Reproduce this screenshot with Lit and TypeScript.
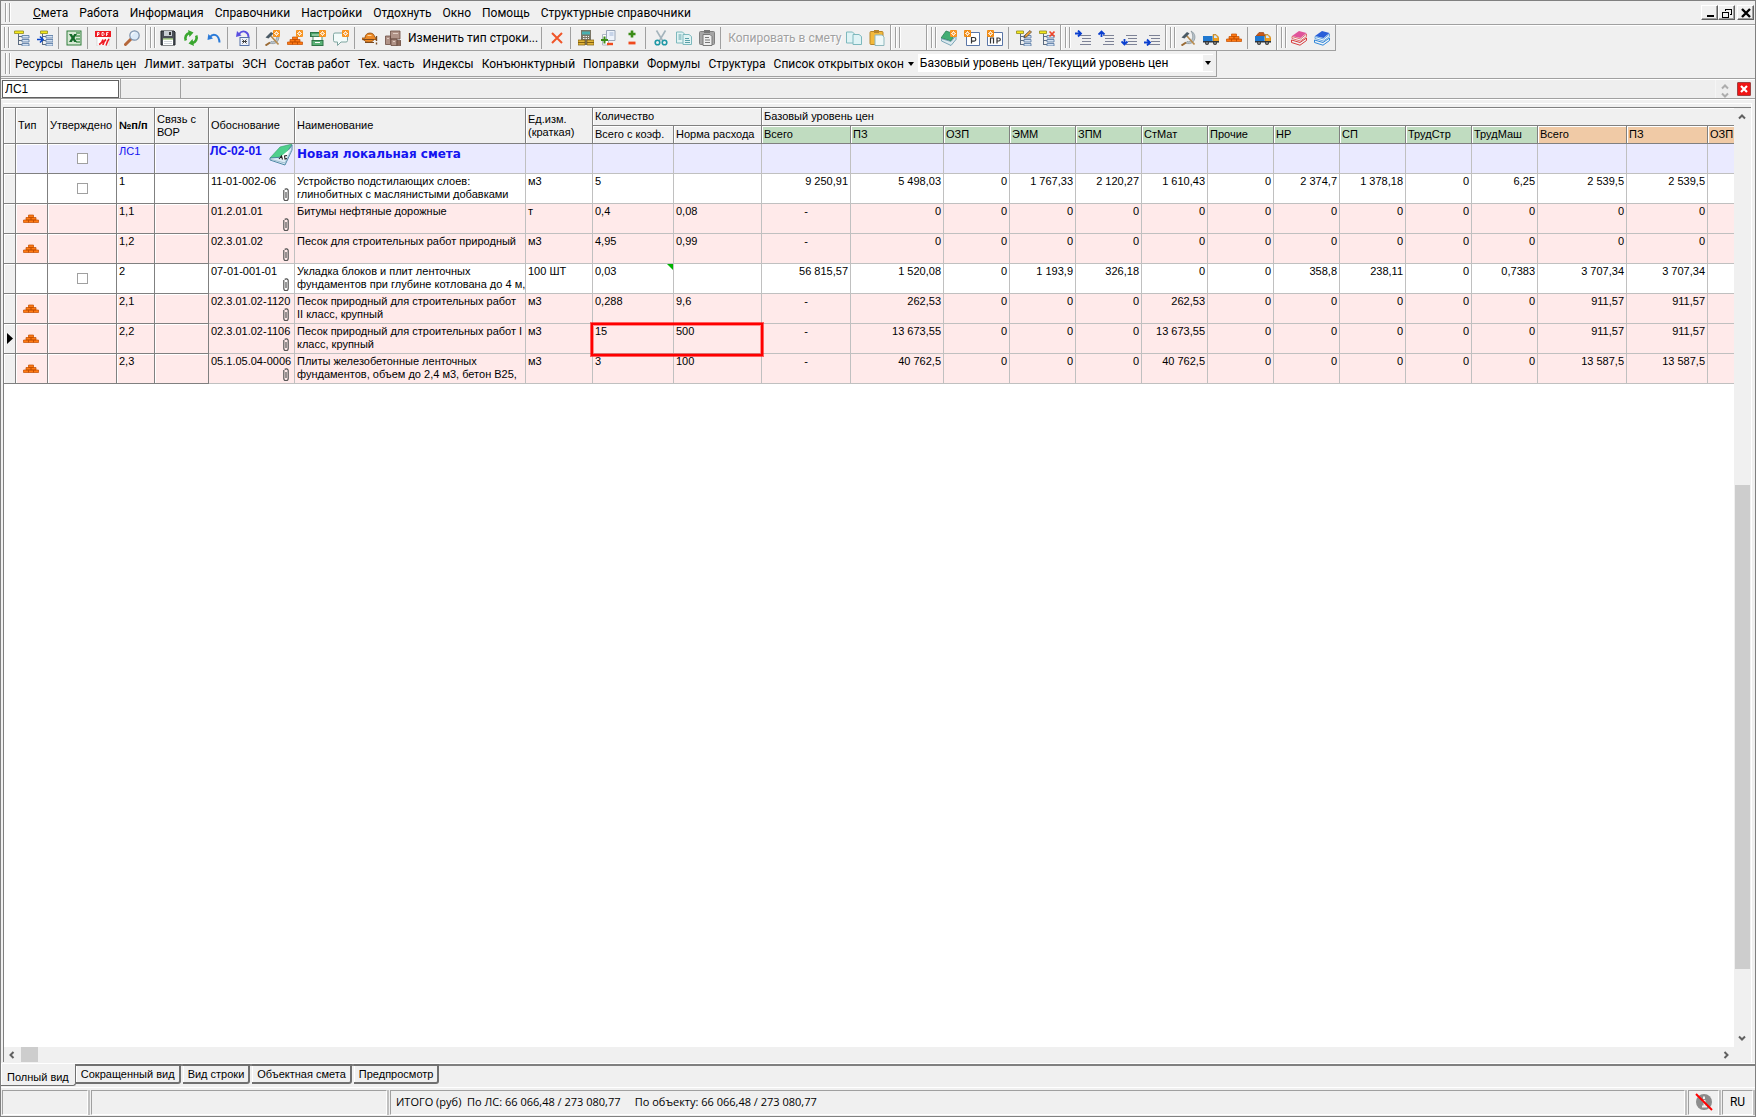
import { LitElement, html, svg, css, nothing } from "lit";
import type { SVGTemplateResult, TemplateResult } from "lit";
import { customElement, property } from "lit/decorators.js";
import { classMap } from "lit/directives/class-map.js";

const spark = svg`<rect x="9" y="0" width="7" height="7" rx="1" fill="#f7931e"/><path d="M12.500 1v5M10 3.500h5M10.800 1.800l3.400 3.400M14.200 1.800l-3.400 3.400" stroke="#fff" stroke-width=".8"/><circle cx="12.500" cy="3.500" r="1.300" fill="#f7931e" stroke="#fff" stroke-width=".8"/>`;
const sparkLeft = svg`<rect x="0" y="0" width="7" height="7" rx="1" fill="#f08a12"/><path d="M3.500 1v5M1 3.500h5M1.800 1.800l3.400 3.400M5.200 1.800L1.800 5.200" stroke="#fff" stroke-width=".8"/><circle cx="3.500" cy="3.500" r="1.200" fill="#f08a12" stroke="#fff" stroke-width=".8"/>`;
const bricksShape = svg`<path d="M5.500 4h5v2.500h-5zM3 6.500h5V9H3zM8 6.500h5V9H8zM.5 9h5v2.500h-5zM5.500 9h5v2.500h-5zM10.500 9h5v2.500h-5z" fill="#ff7a14" stroke="#c24e00" stroke-width=".7" stroke-linejoin="round"/>`;
const hammerShape = svg`<path d="M11 1c4 2 5.500 7 2 11-2 2-5 2-7.500 1l1.500-1.500c2 .5 4 0 5-2 1.500-3 .5-6-1-8.500z" fill="#b9c4cb" stroke="#75838c" stroke-width=".6"/><path d="M6 12.500L1.500 15.500" stroke="#9a6a34" stroke-width="2"/><path d="M6 5l8.500 9.500" stroke="#b78a4c" stroke-width="1.700"/><path d="M1.500 7.500L7 2l2.500 1.500L4.500 8.500z" fill="#4b5b66"/>`;
const treeLines = svg`<path d="M4.500 4v11M4.500 6.500H8M4.500 10.500H8M4.500 14.500H8" stroke="#5b6b80" fill="none"/><path d="M8 5.500h7v2.500H8zM8 9.500h7V12H8zM8 13.500h7V16H8z" fill="#d5e2f2" stroke="#5f7fa8" stroke-width=".9"/>`;
const pagePair = (fill: string) => svg`<path d="M.5 2h6l2 2v9h-8z" fill="${fill}" stroke="#7db8bd"/><path d="M7 4.500h6l2.500 2v8H7z" fill="${fill}" stroke="#7db8bd"/>`;
const paraLines = svg`<path d="M5 5.500h11M7 8.500h9M7 11.500h9M5 14.500h11" stroke="#7d8296" shape-rendering="crispEdges"/>`;
const books = (top: string, side: string) => svg`<path d="M1 6l7-5 7.500 2-6 5z" fill="${top}"/><path d="M1 6.500l8.500 2.500 6-5v2.500L9.500 11 1 8.500z" fill="#f4f8fb" stroke="${side}" stroke-width=".7"/><path d="M.5 10L9 12.500l6.500-4.500v2.500L9 15.200.5 12.500z" fill="#eef3f7" stroke="${side}" stroke-width="1"/>`;
const truckShape = svg`<path d="M10 4.500h3l3 3V12h-6z" fill="#f0a020" stroke="#a06000" stroke-width=".5"/><path d="M11 5.500h2L14.500 8H11z" fill="#cfe8ff"/><path d="M0 6h9.500v5H0z" fill="#1f78d0"/><path d="M0 11h16v1.500H0z" fill="#2a3440"/><circle cx="4" cy="13" r="2" fill="#333"/><circle cx="12" cy="13" r="2" fill="#333"/><circle cx="4" cy="13" r=".8" fill="#ccc"/><circle cx="12" cy="13" r=".8" fill="#ccc"/>`;

const ICONS: Record<string, SVGTemplateResult> = {
  tree: svg`${treeLines}<path d="M.5 1h9v2.500h-9z" fill="#f4e81c" stroke="#8f8a20" stroke-width=".8"/>`,
  treeArrow: svg`<g transform="translate(1 0)">${treeLines}</g><path d="M3.500 1h7v2.500h-7z" fill="#f4e81c" stroke="#8f8a20" stroke-width=".8"/><path d="M0 9.500h5M3 6.500l3 3-3 3" stroke="#0a46c8" stroke-width="1.600" fill="none"/>`,
  excel: svg`<rect x="1" y="1" width="14" height="14" fill="#d6e8d4" stroke="#2e7d3a"/><path d="M10 3h4M10 6h4M10 9h4M10 12h4" stroke="#4f9a58" stroke-width="1.500"/><path d="M3 4h2.800l1.200 2 1.200-2H11L8.500 8 11 12H8.200L7 10l-1.200 2H3l2.500-4z" fill="#156b2a"/>`,
  pdf: svg`<path d="M2 0h12v16H2z" fill="#fff" stroke="#c9c9c9" stroke-width=".6"/><rect x="0" y="1" width="16" height="6" fill="#ee1c24"/><path d="M2.500 6V2.500h1.500v2H2.500M7 2.500V5.500h1.200l.8-.8V3.300l-.8-.8zM11.500 6V2.500h2M11.500 4.200h1.500" stroke="#fff" fill="none" stroke-width=".9"/><path d="M4 14.500c3-1 3.500-3 4-5M8 15c0-2 1-4 3-5.500M11 15.500c1-2 1-4 3-6.500" stroke="#ee1c24" fill="none" stroke-width="1.600"/>`,
  magnifier: svg`<path d="M1.500 14.500L7 9" stroke="#b5673a" stroke-width="3" stroke-linecap="round"/><circle cx="10.500" cy="5.500" r="4.700" fill="#dceaf8" stroke="#7f93ad" stroke-width="1.200"/><path d="M7.500 5.500a3 3 0 0 1 3-3" stroke="#fff" fill="none"/>`,
  save: svg`<path d="M1 1h13l1 1v13H1z" fill="#4a4f57" stroke="#23262b"/><rect x="4" y="1" width="8" height="5" fill="#c9ced4"/><rect x="9" y="2" width="2" height="3" fill="#333"/><rect x="3" y="8.500" width="10" height="6.500" fill="#fff"/><path d="M3 9h10" stroke="#7fb84a"/><path d="M4 11.500h8M4 13.500h8" stroke="#c4cad0" stroke-width=".8"/>`,
  refresh: svg`<path d="M2.800 10.500A5.500 5.500 0 0 1 6.500 3M13.200 5.500A5.500 5.500 0 0 1 9.500 13" fill="none" stroke="#3aa72f" stroke-width="2.600"/><path d="M5 0l5.500 2.500L6.500 7zM11 16l-5.500-2.500L9.500 9z" fill="#3aa72f"/>`,
  undo: svg`<path d="M4 7c3-4 9-3 9.500 5.500" fill="none" stroke="#2a7ad8" stroke-width="2"/><path d="M1.500 10l.8-6 4.700 4.500z" fill="#2a7ad8"/>`,
  undoSheet: svg`<path d="M4 4c4-5 10-2 9.500 4" fill="none" stroke="#5a4fe0" stroke-width="1.800"/><path d="M1 7L2 1l4.500 4.500z" fill="#5a4fe0"/><rect x="5" y="7.500" width="9" height="8" fill="#eef2fb" stroke="#5571a8"/><path d="M7.500 9.500l4 4M11.500 9.500l-4 4M7 11.500h5" stroke="#333" stroke-width=".9"/>`,
  hammerNew: svg`${hammerShape}${spark}`,
  bricksNew: svg`<g transform="translate(0 3)">${bricksShape}</g>${spark}`,
  cardNew: svg`<rect x=".5" y="2.500" width="14" height="4" fill="#4ea36a" stroke="#2f7447"/><path d="M2 5h8" stroke="#cfe8d6"/><rect x="3" y="6.500" width="9" height="4" fill="#fff" stroke="#2f7447" stroke-width=".8"/><rect x="2" y="10.500" width="11" height="5" fill="#5bb277" stroke="#2f7447"/><path d="M5 12.500h5" stroke="#fff"/>${spark}`,
  bubbleNew: svg`<path d="M2 3h11a1.500 1.500 0 0 1 1.500 1.500v6A1.500 1.500 0 0 1 13 12H8l-3.500 3.500V12H2A1.500 1.500 0 0 1 .5 10.500v-6A1.500 1.500 0 0 1 2 3z" fill="#f3fbfa" stroke="#7fa5a0"/>${spark}`,
  helmet: svg`<path d="M0 8h3c0-3 2-5 5-5s4.500 2 4.500 4l1.500 1v1.500H12c-1 3-8 4-10 .5L0 9.500z" fill="#ee8a26" stroke="#8f4e12" stroke-width=".8"/><path d="M3 12.500h9M1 9.500h11" stroke="#7a4a20" stroke-width="1.200"/><path d="M14.500 6v5M14.500 12.500v2" stroke="#7a4a20" stroke-width="1.400"/><path d="M5.500 5.500h4" stroke="#ffd9a0"/>`,
  boxes: svg`<path d="M5.500 1h9.500v8H5.500zM.5 6h5v8.500h-5zM6 9h6v6.500H6z" fill="#b09388" stroke="#6b4c42" stroke-width=".8"/><path d="M12 10.500h4v5h-4z" fill="#8c6a5c" stroke="#5c4036" stroke-width=".6"/><path d="M2 8.500h2M8 3.500h5M8 11.500h2" stroke="#e0ccc2"/>`,
  remove: svg`<path d="M3 3l10 10M13 3L3 13" stroke="#f0562a" stroke-width="2"/>`,
  calc: svg`<rect x="3" y="0" width="10" height="15" fill="#7a7666"/><rect x="4" y="1.500" width="8" height="3" fill="#48b0b0"/><path d="M5 6.500h6M5 8.500h6" stroke="#eee" stroke-dasharray="1.500 1"/><path d="M0 10h7v2.500H0zM0 12.500h7V15H0zM9 10h7v2.500H9zM9 12.500h7V15H9z" fill="#e0b43a" stroke="#7a5a10" stroke-width=".7"/>`,
  pagesDelta: svg`<path d="M1.500 4.500h6v10.500h-6z" fill="#fff" stroke="#b0b8c4"/><path d="M5.500.5h8.500v10H5.500z" fill="#eef3fb" stroke="#9aa6b8"/><path d="M8.500 3h4M8.500 5h4" stroke="#9fb4d6"/><path d="M0 10h7M3.500 6.500v7" stroke="#3b8c17" stroke-width="2"/><path d="M6 14h6" stroke="#f04a1d" stroke-width="2.400"/>`,
  plusMinus: svg`<path d="M4.500 4h7M8 .5v7" stroke="#3b8c17" stroke-width="2.600"/><path d="M4.500 13h7" stroke="#f04a1d" stroke-width="2.800"/>`,
  cut: svg`<path d="M3.500.5l6 10M12.500.5l-6 10" stroke="#a4b4bc" stroke-width="1.600"/><circle cx="4.500" cy="12.500" r="2.300" fill="none" stroke="#1f98a5" stroke-width="1.600"/><circle cx="11.500" cy="12.500" r="2.300" fill="none" stroke="#1f98a5" stroke-width="1.600"/>`,
  copy: svg`${pagePair("#e2f4f4")}<path d="M2.500 5h3M2.500 7h3M2.500 9h3M9 8.500h4M9 10.500h5M9 12.500h5" stroke="#5aa0a8"/>`,
  paste: svg`<rect x=".5" y="1.500" width="15" height="13" rx="1" fill="#a6a6a6" stroke="#808080"/><path d="M5 0h6v3H5z" fill="#777"/><path d="M4 4.500h7l2 2v9H4z" fill="#eee" stroke="#777"/><path d="M6 7.500h4M6 10h5M6 12.500h5" stroke="#777"/>`,
  copyPlain: svg`${pagePair("#dff3f5")}`,
  pasteGold: svg`<rect x="1" y="1.500" width="13" height="13" rx="1" fill="#f3b93a" stroke="#b8862a"/><path d="M5 0h5v3H5z" fill="#b8862a"/><path d="M6 5h7l2 2v8.500H6z" fill="#eef8f8" stroke="#8fb8bd"/>`,
  bookNew: svg`<path d="M5 1l9 3-4 7-10-3z" fill="#43ad74" stroke="#23774a" stroke-width=".7"/><path d="M0 8.500l10 3 5-6v4l-5 6-9.500-4.500z" fill="#dbe9ee" stroke="#5f93a8" stroke-width=".8"/>${spark}`,
  sheetR: svg`<path d="M2.500 2.500h13v13h-13z" fill="#fff" stroke="#5a76a8"/><path d="M7.500 13.500v-6h2.500a1.800 1.800 0 0 1 0 3.600H7.500" fill="none" stroke="#333" stroke-width="1.200"/>${sparkLeft}`,
  sheetPR: svg`<path d="M.5 2.500h15v13H.5z" fill="#fff" stroke="#5a76a8"/><path d="M3.500 13.500v-5.500h3v5.500M10 13.500V8h1.800a1.500 1.500 0 0 1 0 3H10" fill="none" stroke="#333" stroke-width="1.200"/>${sparkLeft}`,
  treeEdit: svg`${treeLines}<path d="M.5 1h7v2.500h-7z" fill="#f4e81c" stroke="#8f8a20" stroke-width=".8"/><path d="M8 7.500l1-2.500L14 .5l1.500 1.500-5 5z" fill="#f2a43a" stroke="#333" stroke-width=".7"/>`,
  treeDelete: svg`${treeLines}<path d="M.5 1h7v2.500h-7z" fill="#f4e81c" stroke="#8f8a20" stroke-width=".8"/><path d="M10.500 1.500l5 5M15.500 1.500l-5 5" stroke="#f0452a" stroke-width="1.600"/>`,
  levelIn: svg`${paraLines}<path d="M0 3.500h5M3 .5l3 3-3 3" stroke="#0a3fd0" stroke-width="1.800" fill="none"/>`,
  levelUp: svg`${paraLines}<path d="M3.500 7V2M.5 4.500l3-3 3 3" stroke="#0a3fd0" stroke-width="1.800" fill="none"/>`,
  levelDown: svg`${paraLines}<path d="M3.500 9v5M.5 11.500l3 3 3-3" stroke="#0a3fd0" stroke-width="1.800" fill="none"/>`,
  levelOut: svg`${paraLines}<path d="M0 12.500h5M3 9.500l3 3-3 3" stroke="#0a3fd0" stroke-width="1.800" fill="none"/>`,
  hammer: hammerShape,
  truck: truckShape,
  bricks: bricksShape,
  truckLoaded: svg`<path d="M1 6l3-3.500h4.500L10 6z" fill="#c9581a" stroke="#8a3a0c" stroke-width=".6"/>${truckShape}`,
  booksRed: books("#e0559a", "#d83a3a"),
  booksBlue: books("#2a5fd8", "#2f86d8"),
};

function icon(name: string): TemplateResult {
  return html`<svg class="icon" viewBox="0 0 16 16" aria-hidden="true">${ICONS[name]}</svg>`;
}

const chevron = (d: string) => html`<svg class="chevron" viewBox="0 0 8 8" aria-hidden="true"><path d="${d}" fill="none" stroke="#606060" stroke-width="2"/></svg>`;

type Tool = { icon?: string; text?: string; sep?: boolean; label?: string; off?: boolean };
const t = (name: string, label: string): Tool => ({ icon: name, label });
const SEP: Tool = { sep: true };

const BANDS: Tool[][] = [
  [t("tree", "Дерево"), t("treeArrow", "Перейти"), SEP, t("excel", "Excel"), SEP, t("pdf", "PDF"), SEP, t("magnifier", "Поиск")],
  [
    t("save", "Сохранить"), t("refresh", "Обновить"), t("undo", "Отменить"), SEP,
    t("undoSheet", "Отменить всё"), SEP,
    t("hammerNew", "Новая работа"), t("bricksNew", "Новый материал"), t("cardNew", "Новый раздел"), t("bubbleNew", "Комментарий"), SEP,
    t("helmet", "Ресурс"), t("boxes", "Оборудование"), { text: "Изменить тип строки..." }, SEP,
    t("remove", "Удалить"), SEP,
    t("calc", "Расчёт"), t("pagesDelta", "Изменения"), t("plusMinus", "Плюс/минус"), SEP,
    t("cut", "Вырезать"), t("copy", "Копировать"), t("paste", "Вставить"), SEP,
    { text: "Копировать в смету", off: true }, t("copyPlain", "Копия"), t("pasteGold", "Вставка"),
  ],
  [],
  [t("bookNew", "Новая смета"), t("sheetR", "Раздел"), t("sheetPR", "Подраздел"), SEP, t("treeEdit", "Править дерево"), t("treeDelete", "Удалить узел")],
  [t("levelIn", "Ниже"), t("levelUp", "Вверх"), t("levelDown", "Вниз"), t("levelOut", "Выше")],
  [t("hammer", "Работы"), t("truck", "Машины"), t("bricks", "Материалы"), SEP, t("truckLoaded", "Перевозка")],
  [t("booksRed", "Справочник 1"), t("booksBlue", "Справочник 2")],
];

const MENU = ["Работа", "Информация", "Справочники", "Настройки", "Отдохнуть", "Окно", "Помощь", "Структурные справочники"];
const PANELS = ["Ресурсы", "Панель цен", "Лимит. затраты", "ЭСН", "Состав работ", "Тех. часть", "Индексы", "Конъюнктурный", "Поправки", "Формулы", "Структура"];
const COLS = [12, 32, 69, 38, 54, 86, 231, 67, 81, 88, 89, 93, 66, 66, 66, 66, 66, 66, 66, 66, 66, 89, 81, 66];
const BASE = ["Всего", "ПЗ", "ОЗП", "ЭММ", "ЗПМ", "СтМат", "Прочие", "НР", "СП", "ТрудСтр", "ТрудМаш"];
const CURRENT = ["Всего", "ПЗ", "ОЗП"];
const VIEWS = ["Полный вид", "Сокращенный вид", "Вид строки", "Объектная смета", "Предпросмотр"];

type Row = { n: string; code: string; name: string; unit: string; qty: string; norm: string; vals: string[]; res?: boolean; note?: boolean; current?: boolean };
const ROWS: Row[] = [
  { n: "1", code: "11-01-002-06", name: "Устройство подстилающих слоев:\nглинобитных с маслянистыми добавками", unit: "м3", qty: "5", norm: "", vals: ["9 250,91", "5 498,03", "0", "1 767,33", "2 120,27", "1 610,43", "0", "2 374,7", "1 378,18", "0", "6,25", "2 539,5", "2 539,5"] },
  { n: "1,1", res: true, code: "01.2.01.01", name: "Битумы нефтяные дорожные", unit: "т", qty: "0,4", norm: "0,08", vals: ["-", "0", "0", "0", "0", "0", "0", "0", "0", "0", "0", "0", "0"] },
  { n: "1,2", res: true, code: "02.3.01.02", name: "Песок для строительных работ природный", unit: "м3", qty: "4,95", norm: "0,99", vals: ["-", "0", "0", "0", "0", "0", "0", "0", "0", "0", "0", "0", "0"] },
  { n: "2", code: "07-01-001-01", name: "Укладка блоков и плит ленточных\nфундаментов при глубине котлована до 4 м,", unit: "100 ШТ", qty: "0,03", norm: "", note: true, vals: ["56 815,57", "1 520,08", "0", "1 193,9", "326,18", "0", "0", "358,8", "238,11", "0", "0,7383", "3 707,34", "3 707,34"] },
  { n: "2,1", res: true, code: "02.3.01.02-1120", name: "Песок природный для строительных работ\nII класс, крупный", unit: "м3", qty: "0,288", norm: "9,6", vals: ["-", "262,53", "0", "0", "0", "262,53", "0", "0", "0", "0", "0", "911,57", "911,57"] },
  { n: "2,2", res: true, current: true, code: "02.3.01.02-1106", name: "Песок природный для строительных работ I\nкласс, крупный", unit: "м3", qty: "15", norm: "500", vals: ["-", "13 673,55", "0", "0", "0", "13 673,55", "0", "0", "0", "0", "0", "911,57", "911,57"] },
  { n: "2,3", res: true, code: "05.1.05.04-0006", name: "Плиты железобетонные ленточных\nфундаментов, объем до 2,4 м3, бетон В25,", unit: "м3", qty: "3", norm: "100", vals: ["-", "40 762,5", "0", "0", "0", "40 762,5", "0", "0", "0", "0", "0", "13 587,5", "13 587,5"] },
];

const shared = css`
  * { box-sizing: border-box; }
  button { font: inherit; color: inherit; margin: 0; padding: 0; border: 0; background: none; }
  .icon { width: 16px; height: 16px; display: block; }
  .chevron { width: 8px; height: 8px; display: block; }
  .grip { width: 5px; flex: none; align-self: stretch; margin: 2px 0; border: solid #a0a0a0; border-width: 0 1px; box-shadow: inset 1px 0 #fff, 1px 0 #fff; }
`;

@customElement("tool-bands")
export class ToolBands extends LitElement {
  static styles = [shared, css`
    :host { display: flex; height: 26px; }
    .band { display: flex; align-items: center; height: 26px; padding: 0 2px 0 4px; border-right: 1px solid #a0a0a0; border-bottom: 1px solid #a0a0a0; box-shadow: inset 1px 1px #fff; }
    .band:first-child { padding-left: 3px; }
    .tools { display: flex; align-items: center; padding-left: 1px; min-width: 24px; }
    .tool { width: 23px; height: 22px; display: grid; place-items: center; }
    .text { height: 22px; padding: 0 1px 0 4px; white-space: nowrap; }
    .text:disabled { color: #a0a0a0; text-shadow: 1px 1px #fff; }
    .sep { width: 1px; height: 22px; margin: 0 3px 0 2px; background: #a0a0a0; }
  `];
  render() {
    return html`${BANDS.map((band) => html`
      <div class="band"><span class="grip"></span><div class="tools">${band.map((x) =>
        x.sep ? html`<span class="sep"></span>`
        : x.text ? html`<button class="text" ?disabled=${x.off ?? false}>${x.text}</button>`
        : html`<button class="tool" aria-label=${x.label!}>${icon(x.icon!)}</button>`)}</div></div>`)}`;
  }
}

@customElement("estimate-grid")
export class EstimateGrid extends LitElement {
  @property({ attribute: false }) rows: Row[] = ROWS;
  static styles = [shared, css`
    :host { display: block; overflow: hidden; background: #fff; min-width: 0; }
    table { table-layout: fixed; border-collapse: separate; border-spacing: 0; width: 0; font: 11px/13px "Liberation Sans", Arial, sans-serif; color: #000; }
    th, td { padding: 1px 2px 0; border: solid #c0c0c0; border-width: 0 1px 1px 0; vertical-align: top; text-align: left; font-weight: 400; }
    td { height: 30px; }
    th { height: 18px; padding: 0 2px; vertical-align: middle; background: #f0f0f0; border-color: #808080; box-shadow: inset 1px 1px #fff; white-space: nowrap; }
    .wrap { white-space: normal; }
    .strong { font-weight: 700; }
    .base { background: #c0dcc0; }
    .now { background: #f0caa6; }
    .fixed { border-color: #808080; box-shadow: inset 1px 1px #fff; }
    .mark { background: #f0f0f0; vertical-align: middle; padding: 0 0 0 3px; }
    .mid { text-align: center; vertical-align: middle; padding: 0; }
    .mid .icon { margin-left: 7px; }
    .res td { background: #ffeaea; }
    .head td { background: #eaeaff; color: #1414f0; }
    .res .mark, .head .mark { background: #f0f0f0; }
    .num { text-align: right; white-space: nowrap; }
    .dash { text-align: center; }
    .two { height: 27px; overflow: hidden; white-space: pre; }
    .rel { position: relative; }
    .name { padding-right: 0; }
    .clip { position: absolute; right: 5px; bottom: 2px; width: 6px; height: 13px; }
    .book { position: absolute; right: 1px; top: 0; width: 24px; height: 22px; }
    .headcode { font-weight: 700; font-size: 12px; line-height: 13px; padding: 1px; }
    .headname { font: 700 12px/18px "DejaVu Sans", Verdana, sans-serif; }
    .note { position: absolute; right: 0; top: 0; width: 6px; height: 6px; background: #00b400; clip-path: polygon(0 0, 100% 0, 100% 100%); }
    .focus { position: absolute; left: -2px; top: -1px; width: 172px; height: 33px; border: 2px solid #f00; box-shadow: 0 0 0 1px #f009, inset 0 0 0 1px #f006; z-index: 1; }
    .check { appearance: none; display: block; width: 11px; height: 11px; margin: 0 auto; border: 1px solid #a0a0a0; background: #fff; }
    .pointer { width: 6px; height: 11px; display: block; }
  `];
  private row(r: Row) {
    return html`<tr class=${classMap({ res: !!r.res })}>
      <td class="fixed mark">${r.current ? html`<svg class="pointer" viewBox="0 0 6 11"><path d="M0 0l6 5.500L0 11z"/></svg>` : nothing}</td>
      <td class="fixed mid">${r.res ? icon("bricks") : nothing}</td>
      <td class="fixed mid">${r.res ? nothing : html`<input class="check" type="checkbox" aria-label="Утверждено ${r.n}">`}</td>
      <td class="fixed">${r.n}</td>
      <td class="fixed"></td>
      <td class="rel">${r.code}<svg class="clip" viewBox="0 0 6 13"><path d="M.8 2v8.500a2.200 2.200 0 0 0 4.400 0V2.500a2 2 0 0 0-3.500-1M3 4v6" fill="none" stroke="#555" stroke-width="1.200"/></svg></td>
      <td class="name"><div class="two">${r.name}</div></td>
      <td>${r.unit}</td>
      <td class="rel">${r.qty}${r.note ? html`<span class="note"></span>` : nothing}${r.current ? html`<span class="focus"></span>` : nothing}</td>
      <td>${r.norm}</td>
      ${r.vals.map((v) => html`<td class=${v === "-" ? "dash" : "num"}>${v}</td>`)}
      <td></td>
    </tr>`;
  }
  render() {
    return html`<table>
      <colgroup>${COLS.map((w) => html`<col style="width:${w}px">`)}</colgroup>
      <thead>
        <tr>
          <th rowspan="2"></th><th rowspan="2">Тип</th><th rowspan="2">Утверждено</th><th rowspan="2" class="strong">№п/п</th>
          <th rowspan="2" class="wrap">Связь с ВОР</th><th rowspan="2">Обоснование</th><th rowspan="2">Наименование</th>
          <th rowspan="2" class="wrap">Ед.изм. (краткая)</th><th colspan="2">Количество</th><th colspan="14">Базовый уровень цен</th>
        </tr>
        <tr>
          <th>Всего с коэф.</th><th>Норма расхода</th>
          ${BASE.map((x) => html`<th class="base">${x}</th>`)}${CURRENT.map((x) => html`<th class="now">${x}</th>`)}
        </tr>
      </thead>
      <tbody>
        <tr class="head">
          <td class="fixed mark"></td><td class="fixed"></td>
          <td class="fixed mid"><input class="check" type="checkbox" aria-label="Утверждено ЛС1"></td>
          <td class="fixed">ЛС1</td><td class="fixed"></td>
          <td class="rel headcode">ЛС-02-01<svg class="book" viewBox="0 0 24 22"><path d="M11 3L23 0 15 13 1 14z" fill="#4fd08c" stroke="#2f9e66" stroke-width=".6"/><path d="M1 14l14-1 8-12v5l-7 15-15-5z" fill="#dcebf5" stroke="#3f7f9c" stroke-width=".9"/><path d="M10 14l11-9-5 11z" fill="#fff"/><path d="M2 15.500l14 3.500 6.500-13" fill="none" stroke="#8fb4c8" stroke-width=".8"/><path d="M10 15l2.500-3 1 3.500M18 11.500l-2.500.5.5 3 2-.5" fill="none" stroke="#222" stroke-width="1.100"/></svg></td>
          <td class="headname">Новая локальная смета</td>
          ${COLS.slice(7).map(() => html`<td></td>`)}
        </tr>
        ${this.rows.map((r) => this.row(r))}
      </tbody>
    </table>`;
  }
}

@customElement("app-root")
export class AppRoot extends LitElement {
  static styles = [shared, css`
    :host { display: flex; flex-direction: column; height: 100vh; box-sizing: border-box; background: #f0f0f0; border: solid #808080; border-width: 1px; font: 12px/16px Roboto, "Segoe UI", sans-serif; color: #000; overflow: hidden; }
    .menu { display: flex; align-items: center; height: 24px; padding: 0 1px 0 4px; border-bottom: 1px solid #a0a0a0; box-shadow: 0 1px #fff; flex: none; }
    .items { display: flex; gap: 11px; padding-left: 23px; flex: 1; white-space: nowrap; }
    .win { display: flex; }
    .winbtn { width: 17px; height: 15px; display: grid; place-items: center; background: #f0f0f0; border: 1px solid; border-color: #fff #606060 #606060 #fff; box-shadow: inset -1px -1px #a0a0a0; }
    .winbtn:last-child { margin-left: 2px; }
    .winbtn svg { width: 10px; height: 10px; }
    .panels { display: flex; align-self: flex-start; align-items: center; height: 26px; padding: 0 3px 0 4px; border: solid #a0a0a0; border-width: 0 1px 1px 0; flex: none; }
    .links { display: flex; gap: 8px; padding-left: 5px; white-space: nowrap; }
    .drop { display: flex; align-items: center; gap: 4px; }
    .drop svg { width: 6px; height: 4px; }
    .combo { display: grid; grid-template-columns: 285px 10px; margin: 0 0 2px 4px; background: #fff; height: 18px; align-items: center; }
    .combo select { grid-area: 1 / 1 / 2 / 3; appearance: none; border: 0; background: none; font: inherit; color: inherit; padding: 0 2px; height: 18px; }
    .combo svg { grid-area: 1 / 2; width: 10px; height: 16px; background: #f0f0f0; pointer-events: none; }
    .pathbar { display: flex; height: 21px; border: solid #a0a0a0; border-width: 1px 0; box-shadow: 0 1px #fff, inset 0 1px #fff; flex: none; margin-top: 1px; padding-left: 1px; background: #eee; }
    .path { width: 117px; height: 18px; margin-top: 1px; border: 1px solid #606060; background: #fff; padding: 0 2px; font: 12px/14px "Liberation Sans", Arial, sans-serif; border-radius: 0; outline: 0; }
    .slot { width: 61px; border: solid #a0a0a0; border-width: 0 1px; margin-left: 1px; }
    .grow { flex: 1; }
    .spin { display: grid; align-content: space-between; justify-items: center; width: 18px; padding-top: 4px; border-left: 1px solid #fff; overflow: hidden; opacity: .45; }
    .close { width: 14px; height: 14px; margin: 3px 4px 0 4px; background: #f01414; border: 1px solid #a04040; border-radius: 1px; display: grid; place-items: center; }
    .close svg { width: 8px; height: 8px; }
    .sheet { flex: 1; min-height: 0; margin: 4px 3px 0 2px; padding-top: 3px; border: solid #fff; border-width: 1px 1px 0 0; display: flex; }
    .frame { flex: 1; min-width: 0; display: grid; grid-template: minmax(0, 1fr) 15px / minmax(0, 1fr) 17px; border: solid #808080; border-width: 1px 0 0 1px; }
    .vbar { display: flex; flex-direction: column; align-items: center; justify-content: space-between; padding: 5px 1px 5px 0; }
    .vtrack { flex: 1; width: 15px; display: grid; grid-template-rows: 360fr 484fr 61fr; margin: 4px 0; }
    .thumb { background: #cdcdcd; }
    .hbar { display: flex; align-items: center; padding: 0 4px; }
    .htrack { flex: 1; height: 15px; display: grid; grid-template-columns: 17px 1fr; margin: 0 5px; }
    .tabs { display: flex; align-items: flex-start; height: 24px; border-top: 1px solid #fff; flex: none; font: 11px/14px "Liberation Sans", Arial, sans-serif; gap: 2px; background: linear-gradient(#808080 2px, transparent 2px); margin-top: 1px; }
    .tab { height: 20px; padding: 0 4px 0 5px; border: solid #707070; border-width: 2px 2px 2px 0; border-radius: 0 0 3px 0; box-shadow: inset 1px 0 #fff; white-space: nowrap; }
    .on { height: 22px; padding: 4px 6px 0 6px; border-width: 0 1px 1px 0; background: #f0f0f0; margin-right: -2px; }
    .status { display: flex; height: 29px; gap: 3px; padding: 2px 2px 1px 1px; border-top: 1px solid #fff; flex: none; }
    .cell { border: 1px solid; border-color: #a0a0a0 #fff #fff #a0a0a0; box-shadow: 2px 0 #c0c0c0; padding: 0 5px 2px; display: flex; align-items: center; white-space: pre; }
    .c1 { width: 86px; }
    .c2 { width: 296px; }
    .c3 { flex: 1; font: 11px/16px "Open Sans", "Segoe UI", sans-serif; }
    .c4 { width: 31px; justify-content: center; }
    .c4 svg { width: 18px; height: 18px; flex: none; }
  `];
  render() {
    return html`
      <nav class="menu"><span class="grip"></span>
        <div class="items"><button><u>С</u>мета</button>${MENU.map((m) => html`<button>${m}</button>`)}</div>
        <div class="win">
          <button class="winbtn" aria-label="Свернуть"><svg viewBox="0 0 10 10"><path d="M2 8h7" stroke="#000" stroke-width="2"/></svg></button>
          <button class="winbtn" aria-label="Восстановить"><svg viewBox="0 0 10 10" shape-rendering="crispEdges"><path d="M3.500 3V1.500h6v5H8M3 1h7M.5 4.500h6v5h-6zM0 4h7" fill="none" stroke="#000"/></svg></button>
          <button class="winbtn" aria-label="Закрыть"><svg viewBox="0 0 10 10"><path d="M1 1l8 8M9 1L1 9" stroke="#000" stroke-width="2.400"/></svg></button>
        </div>
      </nav>
      <tool-bands></tool-bands>
      <div class="panels"><span class="grip"></span>
        <div class="links">${PANELS.map((p) => html`<button>${p}</button>`)}<button class="drop">Список открытых окон<svg viewBox="0 0 6 4"><path d="M0 0h6L3 4z"/></svg></button></div>
        <div class="combo"><select aria-label="Уровень цен"><option>Базовый уровень цен/Текущий уровень цен</option></select><svg viewBox="0 0 10 16"><path d="M2 6h6L5 10z"/></svg></div>
      </div>
      <div class="pathbar"><input class="path" aria-label="Путь" value="ЛС1"><span class="slot"></span><span class="grow"></span>
        <div class="spin">${chevron("M1 5.500l3-3 3 3")}${chevron("M1 2.500l3 3 3-3")}</div>
        <button class="close" aria-label="Закрыть смету"><svg viewBox="0 0 8 8"><path d="M1 1l6 6M7 1L1 7" stroke="#fff" stroke-width="2.200"/></svg></button>
      </div>
      <main class="sheet"><div class="frame">
        <estimate-grid></estimate-grid>
        <div class="vbar">${chevron("M1 5.500l3-3 3 3")}<div class="vtrack"><span></span><span class="thumb"></span></div>${chevron("M1 2.500l3 3 3-3")}</div>
        <div class="hbar">${chevron("M5.500 1l-3 3 3 3")}<div class="htrack"><span class="thumb"></span></div>${chevron("M2.500 1l3 3-3 3")}</div>
      </div></main>
      <div class="tabs">${VIEWS.map((v, i) => html`<button class=${classMap({ tab: true, on: i === 0 })}>${v}</button>`)}</div>
      <footer class="status">
        <div class="cell c1"></div><div class="cell c2"></div>
        <div class="cell c3">ИТОГО (руб)  По ЛС: 66 066,48 / 273 080,77     По объекту: 66 066,48 / 273 080,77</div>
        <div class="cell c4"><svg viewBox="0 0 18 18"><circle cx="9" cy="9" r="8" fill="#8c8c8c"/><path d="M9 3.500v2.500M7 8h2.500v5.500M7 13.500h5" stroke="#f0f0f0" stroke-width="2" fill="none"/><path d="M1 1l16 16" stroke="#f00" stroke-width="2"/></svg></div>
        <div class="cell c4">RU</div>
      </footer>`;
  }
}
